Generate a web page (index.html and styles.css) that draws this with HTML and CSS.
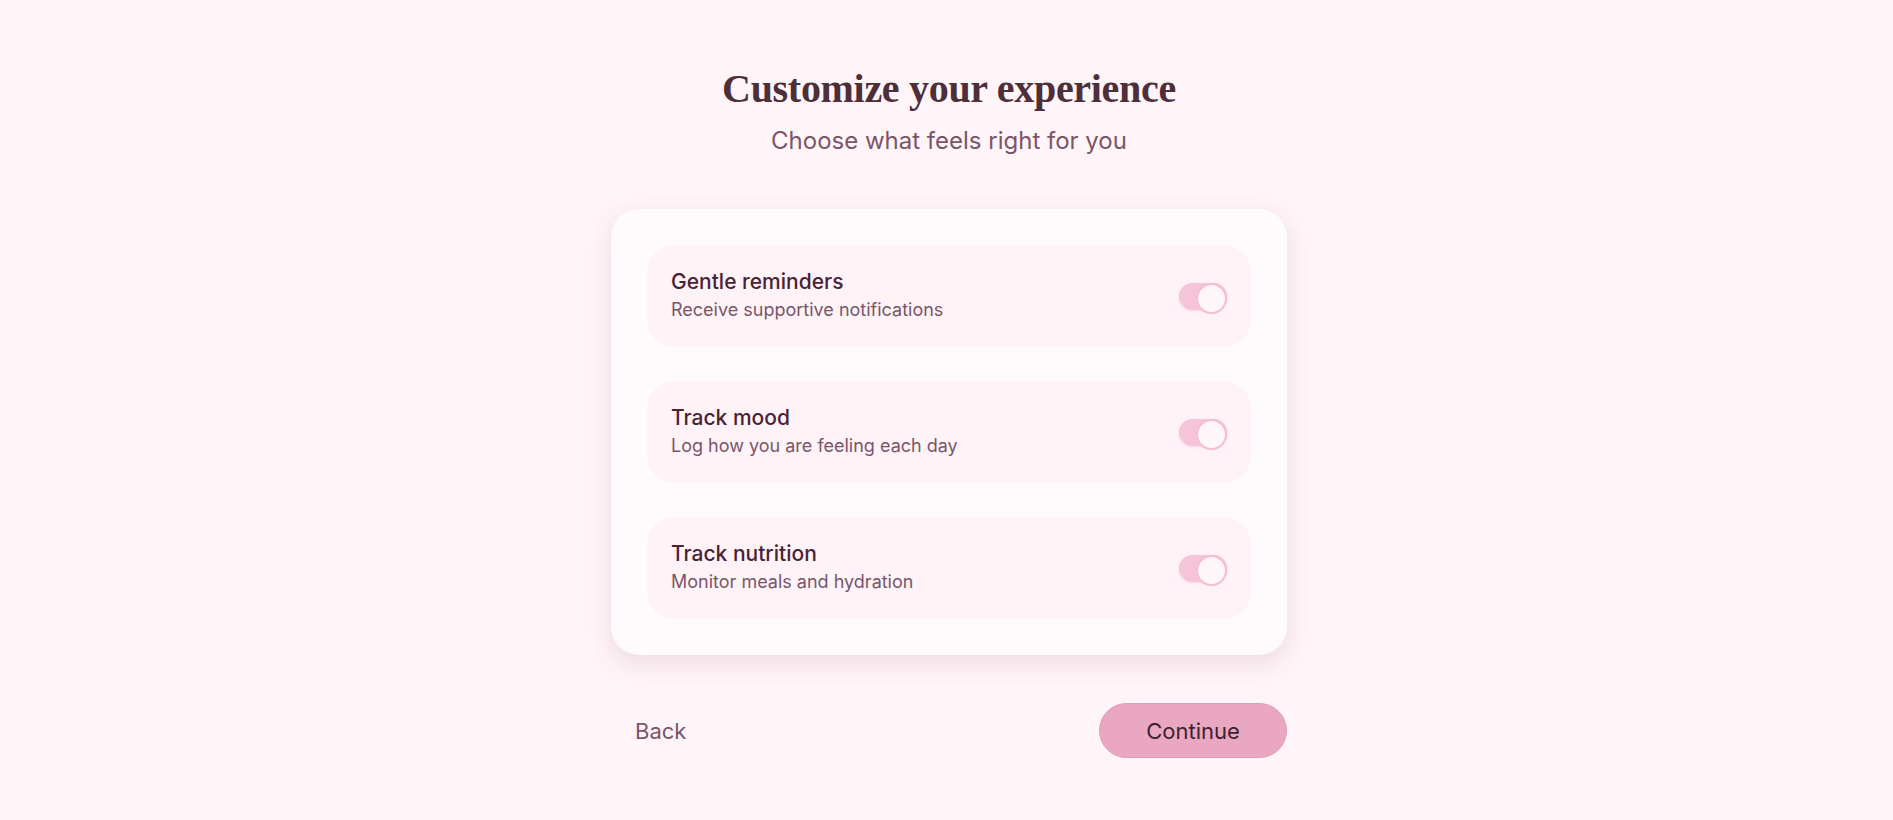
FILE: index.html
```html
<!DOCTYPE html>
<html lang="en">
<head>
    <meta charset="UTF-8">
    <meta name="viewport" content="width=device-width, initial-scale=1.0">
    <title>Customize your experience</title>
    <link rel="stylesheet" href="styles.css">
</head>
<body>
    <div class="container">
        <header class="intro">
            <h1>Customize your experience</h1>
            <p class="subtitle">Choose what feels right for you</p>
        </header>

        <div class="card">
            <div class="option">
                <div class="option-text">
                    <h2>Gentle reminders</h2>
                    <p>Receive supportive notifications</p>
                </div>
                <span class="toggle on"></span>
            </div>
            <div class="option">
                <div class="option-text">
                    <h2>Track mood</h2>
                    <p>Log how you are feeling each day</p>
                </div>
                <span class="toggle on"></span>
            </div>
            <div class="option">
                <div class="option-text">
                    <h2>Track nutrition</h2>
                    <p>Monitor meals and hydration</p>
                </div>
                <span class="toggle on"></span>
            </div>
        </div>

        <div class="actions">
            <button class="btn-back">Back</button>
            <button class="btn-continue">Continue</button>
        </div>
    </div>
</body>
</html>
```

FILE: styles.css
```css
* {
    box-sizing: border-box;
    margin: 0;
    padding: 0;
}

body {
    font-family: Inter, "Noto Sans", sans-serif;
    background-color: #fff4f8;
    color: #4a2a3a;
    min-height: 100vh;
    padding-left: 5px;
}

.container {
    width: 676px;
    margin: 0 auto;
    padding-top: 63px;
}

.intro {
    text-align: center;
    margin-bottom: 52px;
}

h1 {
    font-family: "Liberation Serif", "DejaVu Serif", serif;
    font-weight: 700;
    font-size: 40px;
    line-height: 52px;
    color: #4d2f39;
    letter-spacing: -0.3px;
}

.subtitle {
    font-size: 24px;
    line-height: 32px;
    margin-top: 10px;
    color: #7a5569;
}

.card {
    background: #fffbfd;
    border-radius: 28px;
    padding: 37px 36px;
    display: flex;
    flex-direction: column;
    gap: 36px;
    box-shadow: 0 8px 24px rgba(120, 70, 95, 0.14);
}

.option {
    display: flex;
    align-items: center;
    justify-content: space-between;
    background: #fff3f7;
    border-radius: 26px;
    padding: 24px;
}

.option h2 {
    font-size: 21px;
    font-weight: 500;
    line-height: 24px;
    color: #4a2236;
}

.option p {
    font-size: 18px;
    line-height: 24px;
    margin-top: 4px;
    color: #7a5569;
}

.toggle {
    position: relative;
    width: 48px;
    height: 27px;
    border-radius: 14px;
    background: #f6c4d8;
    box-shadow: 0 1px 3px rgba(200, 120, 150, 0.2);
}

.toggle::after {
    content: '';
    position: absolute;
    top: 0;
    right: 0;
    width: 27px;
    height: 27px;
    border-radius: 50%;
    background: #fff6f9;
    border: 2px solid #f7bcd1;
}

.actions {
    display: flex;
    justify-content: space-between;
    align-items: center;
    margin-top: 48px;
}

.actions button {
    font-family: Inter, "Noto Sans", sans-serif;
    font-size: 22px;
    border-radius: 28px;
    cursor: pointer;
}

.btn-back {
    background: none;
    border: none;
    color: #7a5569;
    padding: 14px 24px;
}

.btn-continue {
    width: 188px;
    height: 55px;
    background: #eaa7c2;
    border: 1px solid #e29cb9;
    color: #3e2230;
}
```
